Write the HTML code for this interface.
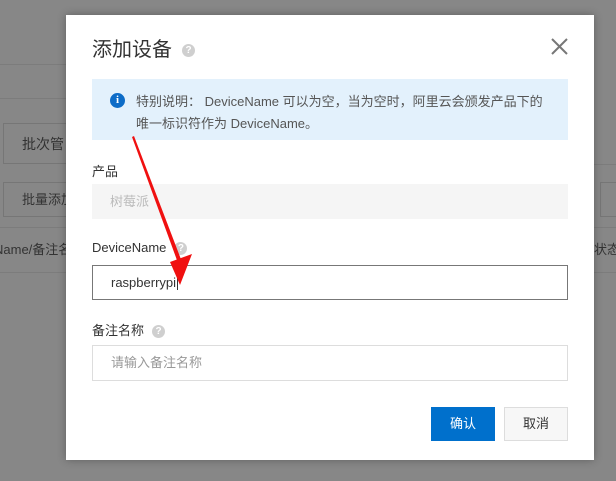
<!DOCTYPE html>
<html><head><meta charset="utf-8"><style>
body{margin:0;width:616px;height:481px;background:#878787;position:relative;overflow:hidden;font-family:"Liberation Sans","Noto Sans CJK SC",sans-serif;}
.a{position:absolute;white-space:nowrap}
.m{position:absolute;left:66px;top:15px;width:528px;height:445px;background:#fff;box-shadow:0 0 8px rgba(0,0,0,.3)}
.lbl{position:absolute;font-size:13px;color:#333}
.q{display:inline-block;width:13px;height:13px;border-radius:50%;background:#cfcfcf;color:#fff;font-size:10px;line-height:13px;text-align:center;font-weight:bold;vertical-align:middle;margin-left:8px}
</style></head><body>
<div class="a" style="left:0;top:64px;width:66px;height:1px;background:#7c7c7c"></div>
<div class="a" style="left:0;top:98px;width:66px;height:1px;background:#7c7c7c"></div>
<div class="a" style="left:3px;top:123px;width:70px;height:41px;border:1px solid #767676;box-sizing:border-box;font-size:14px;color:#333;line-height:40px;padding-left:18px">批次管</div>
<div class="a" style="left:3px;top:182px;width:70px;height:35px;border:1px solid #767676;box-sizing:border-box;font-size:13px;color:#333;line-height:33px;padding-left:18px;overflow:hidden">批量添加</div>
<div class="a" style="left:0;top:227px;width:616px;height:1px;background:#7c7c7c"></div>
<div class="a" style="left:-6px;top:239px;font-size:13px;color:#333">Name/备注名</div>
<div class="a" style="left:594px;top:239px;font-size:13px;color:#333">状态</div>
<div class="a" style="left:0;top:272px;width:616px;height:1px;background:#7c7c7c"></div>
<div class="a" style="left:600px;top:182px;width:20px;height:35px;border:1px solid #767676;box-sizing:border-box"></div>
<div class="a" style="left:594px;top:164px;width:22px;height:1px;background:#7c7c7c"></div>
<div class="m">
 <div class="a" style="left:26px;top:18px;font-size:20px;color:#333">添加设备<span class="q" style="margin-left:10px">?</span></div>
 <svg class="a" style="left:485px;top:23px" width="17" height="17" viewBox="0 0 17 17"><path d="M1 1L16 16M16 1L1 16" stroke="#777" stroke-width="2"/></svg>
 <div class="a" style="left:26px;top:64px;width:476px;height:61px;background:#e3f1fc"></div>
 <div class="a" style="left:44px;top:78px;width:15px;height:15px;border-radius:50%;background:#0d6cc7;color:#fff;font-size:11px;font-weight:bold;text-align:center;line-height:15px;font-family:'Liberation Serif',serif">i</div>
 <div class="a" style="left:70px;top:76px;font-size:13px;color:#555;line-height:22px;width:420px">特别说明： DeviceName 可以为空，当为空时，阿里云会颁发产品下的<br>唯一标识符作为 DeviceName。</div>
 <div class="lbl" style="left:26px;top:146px">产品</div>
 <div class="a" style="left:26px;top:169px;width:476px;height:35px;background:#f5f5f5;font-size:13px;color:#bbb;line-height:35px;padding-left:18px;box-sizing:border-box">树莓派</div>
 <div class="lbl" style="left:26px;top:225px">DeviceName<span class="q">?</span></div>
 <div class="a" style="left:26px;top:250px;width:476px;height:35px;border:1px solid #777;box-sizing:border-box;font-size:13px;color:#333;line-height:33px;padding-left:18px">raspberrypi<span style="border-left:1px solid #333;margin-left:1px"></span></div>
 <div class="lbl" style="left:26px;top:305px">备注名称<span class="q">?</span></div>
 <div class="a" style="left:26px;top:330px;width:476px;height:36px;border:1px solid #ddd;box-sizing:border-box;font-size:13px;color:#999;line-height:34px;padding-left:18px">请输入备注名称</div>
 <div class="a" style="left:365px;top:392px;width:64px;height:34px;background:#0070cc;color:#fff;font-size:13px;text-align:center;line-height:34px">确认</div>
 <div class="a" style="left:438px;top:392px;width:64px;height:34px;background:#f7f7f7;border:1px solid #ddd;box-sizing:border-box;color:#333;font-size:13px;text-align:center;line-height:32px">取消</div>
</div>
<svg class="a" style="left:0;top:0" width="616" height="481"><path d="M132 137L134 136L182 262L178 263Z" fill="#f01010"/><path d="M170 262L192 254L180 285Z" fill="#f01010"/></svg>
</body></html>
